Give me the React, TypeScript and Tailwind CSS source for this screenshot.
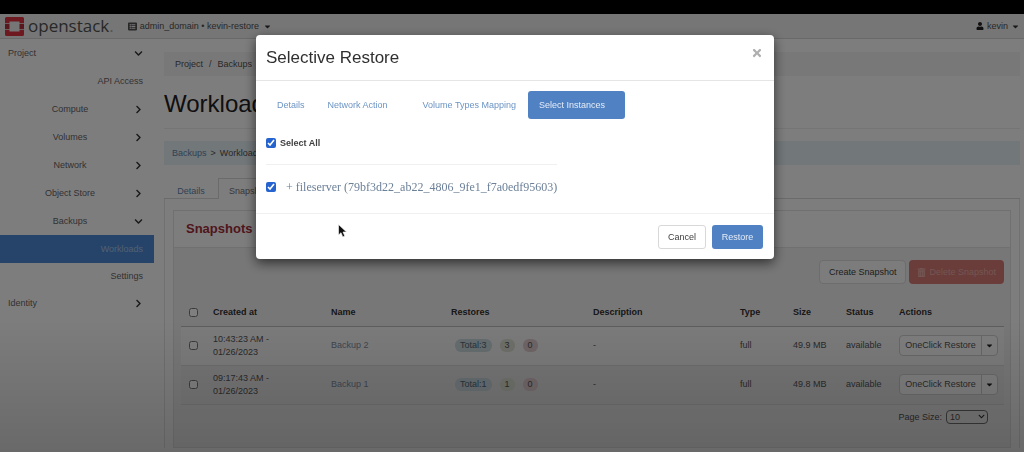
import { useState } from "react";
import { FaCaretDown, FaChevronDown, FaChevronRight, FaListAlt, FaTimes, FaTrashAlt, FaUser } from "react-icons/fa";

interface NavItem {
    label: string;
    align: "left" | "center" | "right";
    chevron?: "down" | "right";
    active?: boolean;
    last?: boolean;
}

interface Snapshot {
    time: string;
    date: string;
    name: string;
    total: number;
    ok: number;
    failed: number;
    size: string;
}

const NAV_ITEMS: NavItem[] = [
    { label: "Project", align: "left", chevron: "down" },
    { label: "API Access", align: "right" },
    { label: "Compute", align: "center", chevron: "right" },
    { label: "Volumes", align: "center", chevron: "right" },
    { label: "Network", align: "center", chevron: "right" },
    { label: "Object Store", align: "center", chevron: "right" },
    { label: "Backups", align: "center", chevron: "down" },
    { label: "Workloads", align: "right", active: true },
    { label: "Settings", align: "right", last: true },
    { label: "Identity", align: "left", chevron: "right" },
];

const SNAPSHOTS: Snapshot[] = [
    { time: "10:43:23 AM -", date: "01/26/2023", name: "Backup 2", total: 3, ok: 3, failed: 0, size: "49.9 MB" },
    { time: "09:17:43 AM -", date: "01/26/2023", name: "Backup 1", total: 1, ok: 1, failed: 0, size: "49.8 MB" },
];

const MODAL_TABS = [
    { label: "Details", spacing: "pl-[11px] pr-3" },
    { label: "Network Action", spacing: "pl-[11px] pr-6" },
    { label: "Volume Types Mapping", spacing: "pl-[11px] pr-3" },
    { label: "Select Instances", spacing: "pl-[11px] pr-5" },
];

const OpenStackLogo = () => (
    <svg viewBox="0 0 19 19" className="h-[19px] w-[19px]" aria-hidden="true">
        <path d="M1.500 0h16A1.500 1.500 0 0 1 19 1.500V6h-4.500V4.500h-10V6H0V1.500A1.500 1.500 0 0 1 1.500 0Z" fill="#dc3040" />
        <path d="M0 13h4.500v1.500h10V13H19v4.500a1.500 1.500 0 0 1-1.500 1.500h-16A1.500 1.500 0 0 1 0 17.500Z" fill="#dc3040" />
        <path d="M0 6.800h4.500v5.400H0ZM14.500 6.800H19v5.400h-4.500Z" fill="#b02c3a" />
    </svg>
);

const MouseCursor = () => (
    <svg viewBox="0 0 10 14" className="absolute left-[82px] top-[189px] h-[14px] w-[10px]" aria-hidden="true">
        <path d="M.5.5v10.500l2.500-2.300 1.800 4.200 2-.9L5 8h3.500Z" fill="#111" stroke="#fff" strokeWidth=".6" />
    </svg>
);

const Navbar = () => (
    <header className="flex h-[25px] items-center justify-between border-b border-[#d2d2d2] bg-[#ececec] pl-[5px] pr-1">
        <div className="flex items-center">
            <a href="#home" className="flex items-center gap-1">
                <OpenStackLogo />
                <span className="font-['Open_Sans',sans-serif] text-[17px] font-medium leading-5 text-[#505050]">
                    openstack<span className="text-[#aaa]">.</span>
                </span>
            </a>
            <button className="ml-[14px] flex items-center gap-[3px] text-[#505050]">
                <FaListAlt />
                admin_domain • kevin-restore
                <FaCaretDown className="ml-px text-[#303030]" />
            </button>
        </div>
        <button className="flex items-center gap-[3px] text-[#505050]">
            <FaUser className="h-2 w-2 text-[#202020]" />
            kevin
            <FaCaretDown className="text-[#303030]" />
        </button>
    </header>
);

const Sidebar = () => (
    <nav className="w-[154px] shrink-0">
        {NAV_ITEMS.map((item) => (
            <a
                key={item.label}
                href="#nav"
                className={`flex items-center justify-between pr-[11px] ${item.last ? "h-[26px]" : "h-7"} ${
                    item.active ? "bg-[#4c88d2] text-[#a4c0e6]" : "text-[#646464]"
                }`}
            >
                <span
                    className={
                        item.align === "left"
                            ? "pl-2"
                            : item.align === "center"
                              ? "w-[140px] pl-[6px] text-center"
                              : "w-full text-right"
                    }
                >
                    {item.label}
                </span>
                {item.chevron === "down" && <FaChevronDown className="shrink-0 text-[#303030]" />}
                {item.chevron === "right" && <FaChevronRight className="shrink-0 text-[#303030]" />}
            </a>
        ))}
    </nav>
);

const SnapshotTable = () => (
    <table className="w-full table-fixed text-left leading-[13px] text-[#545454]">
        <colgroup>
            <col className="w-8" />
            <col className="w-[118px]" />
            <col className="w-[120px]" />
            <col className="w-[142px]" />
            <col />
            <col className="w-[53px]" />
            <col className="w-[53px]" />
            <col className="w-[53px]" />
            <col className="w-[105px]" />
        </colgroup>
        <thead>
            <tr className="h-[26px] border-b border-[#bcbcbc] text-[#303030]">
                <th className="pl-2">
                    <input type="checkbox" aria-label="Select all snapshots" className="block h-[9px] w-[9px]" />
                </th>
                <th>Created at</th>
                <th>Name</th>
                <th>Restores</th>
                <th>Description</th>
                <th>Type</th>
                <th>Size</th>
                <th>Status</th>
                <th>Actions</th>
            </tr>
        </thead>
        <tbody>
            {SNAPSHOTS.map((snapshot) => (
                <tr key={snapshot.name} className="h-[39px] border-b border-[#dcdcdc] odd:bg-[#f8f6f8] even:bg-[#ebe9eb]">
                    <td className="pl-2">
                        <input type="checkbox" aria-label={snapshot.name} className="block h-[9px] w-[9px]" />
                    </td>
                    <td>
                        {snapshot.time}
                        <br />
                        {snapshot.date}
                    </td>
                    <td>
                        <a href="#backup" className="text-[#7c8c9c]">
                            {snapshot.name}
                        </a>
                    </td>
                    <td>
                        <div className="flex gap-2 pl-1">
                            <span className="rounded-md bg-[#ccdbe0] px-[5px] text-[#4c6878]">Total:{snapshot.total}</span>
                            <span className="rounded-md bg-[#dde0d4] px-[5px]">{snapshot.ok}</span>
                            <span className="rounded-md bg-[#e0ccd0] px-[5px]">{snapshot.failed}</span>
                        </div>
                    </td>
                    <td>-</td>
                    <td>full</td>
                    <td>{snapshot.size}</td>
                    <td>available</td>
                    <td>
                        <div className="flex h-[21px] w-[99px] rounded-sm border border-[#d0d0d0] bg-[#fcfcfc]">
                            <button className="grow whitespace-nowrap">OneClick Restore</button>
                            <button
                                aria-label="More actions"
                                className="flex w-4 shrink-0 items-center justify-center border-l border-[#d0d0d0] text-[#202020]"
                            >
                                <FaCaretDown />
                            </button>
                        </div>
                    </td>
                </tr>
            ))}
        </tbody>
    </table>
);

const Workload = () => (
    <main className="flex min-w-0 grow flex-col pb-1 pl-[10px] pr-1">
        <div className="mt-[13px] flex h-6 items-center gap-[6px] bg-[#f2f0f2] px-[11px] text-[#505050]">
            <a href="#project">Project</a>
            <span>/</span>
            <a href="#backups">Backups</a>
        </div>
        <h1 className="mt-[14px] text-2xl leading-7 text-[#202020]">Workload</h1>
        <hr className="mt-[10px] border-[#eaeaea]" />
        <div className="mt-3 flex h-6 items-center gap-1 bg-[#e4eef2] px-2 text-[#505050]">
            <a href="#backups" className="text-[#5c86ac]">
                Backups
            </a>
            <span>&gt;</span>
            <span>Workload</span>
        </div>

        {/* Tabs */}
        <div className="mt-[13px] flex h-[21px] border-b border-[#d6d6d6]">
            <button className="w-[54px] pt-[5px] text-[#5c86ac]">Details</button>
            <button className="-mb-px border border-b-0 border-[#d6d6d6] bg-[#fdfbfd] px-[10px] pt-1 text-[#707070]">
                Snapshots
            </button>
        </div>

        <div className="grow border-x border-[#e0e0e0] px-2 pt-[11px]">
            <section className="flex h-full flex-col border border-[#e0e0e0] bg-[#f0eef0]">
                <h2 className="flex h-[37px] items-center border-b border-[#e0e0e0] bg-[#fcfafc] px-3 text-[13px] font-bold text-[#a02c38]">
                    Snapshots
                </h2>
                <div className="pl-[7px] pr-[6px] pt-3">
                    <div className="flex justify-end gap-[3px]">
                        <button className="h-6 rounded-sm border border-[#dadada] bg-[#f8f8f8] px-[9px] text-[#404040]">
                            Create Snapshot
                        </button>
                        <button className="flex h-6 items-center gap-[3px] rounded-sm bg-[#d47a74] px-2 text-[#e6aca6]">
                            <FaTrashAlt />
                            Delete Snapshot
                        </button>
                    </div>
                    <div className="mt-4">
                        <SnapshotTable />
                    </div>
                    <div className="mt-[5px] flex items-center justify-end gap-1 pr-4 text-[#505050]">
                        <label htmlFor="page-size">Page Size:</label>
                        <div className="relative flex items-center">
                            <select
                                id="page-size"
                                className="h-[14px] w-[42px] appearance-none rounded-sm border border-[#707070] bg-transparent pl-[3px]"
                            >
                                <option>10</option>
                            </select>
                            <FaChevronDown className="pointer-events-none absolute right-[3px] h-[7px] w-[7px] text-[#303030]" />
                        </div>
                    </div>
                </div>
            </section>
        </div>
    </main>
);

const SelectiveRestoreModal = () => {
    const [activeTab, setActiveTab] = useState("Select Instances");

    return (
        <div className="fixed inset-0 z-50 flex items-start justify-center pl-[6px] pt-[35px]">
            {/* Backdrop */}
            <div className="absolute inset-0 bg-linear-to-b from-black/50 from-70% to-black/58"></div>

            {/* Modal Content */}
            <div
                role="dialog"
                aria-label="Selective Restore"
                className="relative w-full max-w-[518px] rounded bg-white text-[#404040] shadow-[0_4px_12px_rgba(0,0,0,0.6)]"
            >
                <div className="flex h-[46px] items-center justify-between border-b border-[#e5e5e5] px-[10px]">
                    <h2 className="text-[17px] leading-6 text-[#303030]">Selective Restore</h2>
                    <button aria-label="Close" className="mb-[10px] mr-px text-[#b0b0b0]">
                        <FaTimes className="h-3 w-3" />
                    </button>
                </div>

                <div className="px-[10px] pt-[10px]">
                    <div className="flex h-7">
                        {MODAL_TABS.map((tab) => (
                            <button
                                key={tab.label}
                                onClick={() => setActiveTab(tab.label)}
                                className={`rounded-[3px] ${tab.spacing} ${
                                    activeTab === tab.label ? "bg-[#5081c2] text-[#e4ecf8]" : "text-[#6c94c4]"
                                }`}
                            >
                                {tab.label}
                            </button>
                        ))}
                    </div>

                    <label className="mt-[17px] flex items-center gap-1 font-bold leading-[14px]">
                        <input type="checkbox" defaultChecked className="h-[10px] w-[10px] accent-[#2563cf]" />
                        Select All
                    </label>
                    <hr className="mt-[14px] w-[291px] border-[#f0f0f0]" />
                    <div className="mt-[13px] flex items-center gap-[10px]">
                        <input
                            type="checkbox"
                            id="fileserver"
                            defaultChecked
                            className="h-[10px] w-[10px] accent-[#2563cf]"
                        />
                        <label
                            htmlFor="fileserver"
                            className="font-['Liberation_Serif',serif] text-xs leading-[18px] text-[#6c8098]"
                        >
                            + fileserver (79bf3d22_ab22_4806_9fe1_f7a0edf95603)
                        </label>
                    </div>
                </div>

                {/* Footer */}
                <div className="mt-[17px] flex justify-end gap-[6px] border-t border-[#f0f0f0] px-[11px] pb-[10px] pt-[11px]">
                    <button className="h-6 w-12 rounded-[3px] border border-[#d8d8d8]">Cancel</button>
                    <button className="h-6 w-[51px] rounded-[3px] bg-[#5081c2] text-[#e4ecf8]">Restore</button>
                </div>

                <MouseCursor />
            </div>
        </div>
    );
};

const App = () => (
    <div className="flex min-h-screen flex-col bg-[#fdfbfd] font-['Liberation_Sans',sans-serif] text-[9px] leading-3">
        <div className="h-[14px] bg-black"></div>
        <Navbar />
        <div className="flex grow">
            <Sidebar />
            <Workload />
        </div>
        <SelectiveRestoreModal />
    </div>
);

export default App;
